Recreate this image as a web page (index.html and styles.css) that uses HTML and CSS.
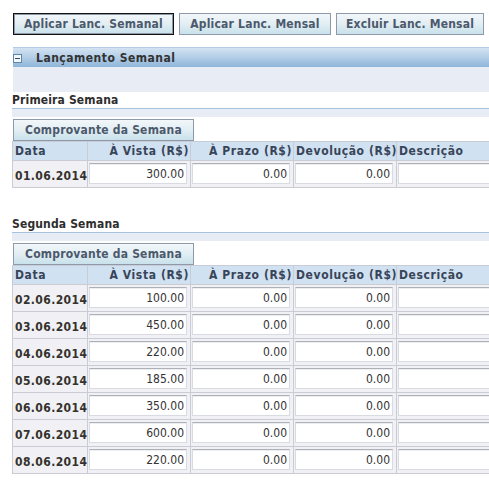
FILE: index.html
```html
<!DOCTYPE html>
<html lang="pt">
<head>
<meta charset="utf-8">
<title>Lançamento Semanal</title>
<link rel="stylesheet" href="styles.css">
</head>
<body>
<div class="page">
  <div class="actions">
    <button class="btn btn-focus btn-w1">Aplicar Lanc. Semanal</button>
    <button class="btn btn-w2">Aplicar Lanc. Mensal</button>
    <button class="btn btn-w3">Excluir Lanc. Mensal</button>
  </div>

  <div class="panel-head">
    <span class="toggle"><span class="toggle-bar"></span></span>
    <span class="panel-title">Lançamento Semanal</span>
  </div>
  <div class="panel-band"></div>

  <section class="week">
    <h2 class="week-title">Primeira Semana</h2>
    <div class="week-band"></div>
    <button class="btn btn-small">Comprovante da Semana</button>
    <table class="grid">
      <thead>
        <tr>
          <th class="c-date">Data</th>
          <th class="c-num">À Vista (R$)</th>
          <th class="c-num">À Prazo (R$)</th>
          <th class="c-num">Devolução (R$)</th>
          <th class="c-desc">Descrição</th>
        </tr>
      </thead>
      <tbody>
        <tr><td class="date">01.06.2014</td><td><input class="inp" value="300.00"></td><td><input class="inp" value="0.00"></td><td><input class="inp" value="0.00"></td><td><input class="inp inp-text" value=""></td></tr>
      </tbody>
    </table>
  </section>

  <section class="week week-2">
    <h2 class="week-title">Segunda Semana</h2>
    <div class="week-band"></div>
    <button class="btn btn-small">Comprovante da Semana</button>
    <table class="grid">
      <thead>
        <tr>
          <th class="c-date">Data</th>
          <th class="c-num">À Vista (R$)</th>
          <th class="c-num">À Prazo (R$)</th>
          <th class="c-num">Devolução (R$)</th>
          <th class="c-desc">Descrição</th>
        </tr>
      </thead>
      <tbody>
        <tr><td class="date">02.06.2014</td><td><input class="inp" value="100.00"></td><td><input class="inp" value="0.00"></td><td><input class="inp" value="0.00"></td><td><input class="inp inp-text" value=""></td></tr>
        <tr><td class="date">03.06.2014</td><td><input class="inp" value="450.00"></td><td><input class="inp" value="0.00"></td><td><input class="inp" value="0.00"></td><td><input class="inp inp-text" value=""></td></tr>
        <tr><td class="date">04.06.2014</td><td><input class="inp" value="220.00"></td><td><input class="inp" value="0.00"></td><td><input class="inp" value="0.00"></td><td><input class="inp inp-text" value=""></td></tr>
        <tr><td class="date">05.06.2014</td><td><input class="inp" value="185.00"></td><td><input class="inp" value="0.00"></td><td><input class="inp" value="0.00"></td><td><input class="inp inp-text" value=""></td></tr>
        <tr><td class="date">06.06.2014</td><td><input class="inp" value="350.00"></td><td><input class="inp" value="0.00"></td><td><input class="inp" value="0.00"></td><td><input class="inp inp-text" value=""></td></tr>
        <tr><td class="date">07.06.2014</td><td><input class="inp" value="600.00"></td><td><input class="inp" value="0.00"></td><td><input class="inp" value="0.00"></td><td><input class="inp inp-text" value=""></td></tr>
        <tr><td class="date">08.06.2014</td><td><input class="inp" value="220.00"></td><td><input class="inp" value="0.00"></td><td><input class="inp" value="0.00"></td><td><input class="inp inp-text" value=""></td></tr>
      </tbody>
    </table>
  </section>
</div>
</body>
</html>
```

FILE: styles.css
```css
html, body {
  margin: 0;
  padding: 0;
  background: #ffffff;
  overflow: hidden;
}

body {
  font-family: "DejaVu Sans Condensed", "DejaVu Sans", Verdana, sans-serif;
  font-stretch: condensed;
  font-size: 12px;
  color: #333333;
}

.page {
  padding: 13px 0 0 12px;
  width: 520px;
}

/* buttons */
.actions {
  display: flex;
  gap: 5px;
  margin-left: 1px;
  height: 22px;
}

.btn {
  height: 22px;
  box-sizing: border-box;
  padding: 0;
  border: 1px solid #8e9aa9;
  background: linear-gradient(to bottom, #f2f7f9 0%, #e2eef3 50%, #c8e1eb 100%);
  font-family: "DejaVu Sans Condensed", "DejaVu Sans", Verdana, sans-serif;
  font-stretch: condensed;
  font-size: 12px;
  font-weight: bold;
  letter-spacing: 0.2px;
  color: #4c596c;
  line-height: 20px;
  text-align: center;
  cursor: pointer;
}

.btn-w1 { width: 161px; }
.btn-w2 { width: 152px; }
.btn-w3 { width: 148px; }

.btn-focus {
  border: 1px solid #111111;
  box-shadow: inset 0 0 0 1px #8e9aa9;
}

.btn-small {
  display: block;
  margin: 2px 0 0 1px;
  width: 181px;
}

/* panel */
.panel-head {
  margin: 12px 0 0 1px;
  height: 20px;
  box-sizing: border-box;
  border-top: 1px solid #b3cce3;
  background: linear-gradient(to bottom, #d3e3f2 0%, #b2cde6 50%, #8db5d9 100%);
  display: flex;
  align-items: center;
}

.toggle {
  width: 9px;
  height: 9px;
  box-sizing: border-box;
  border: 1px solid #5f86ad;
  background: #f4f8fc;
  margin: 2px 0 0 0;
  display: flex;
  align-items: center;
  justify-content: center;
}

.toggle-bar {
  width: 5px;
  height: 1px;
  background: #33475e;
}

.panel-title {
  margin-left: 14px;
  font-weight: bold;
  letter-spacing: 0.5px;
  color: #333333;
}

.panel-band {
  margin-left: 1px;
  height: 25px;
  background: #e8edf5;
}

/* week sections */
.week-title {
  margin: 0;
  height: 17px;
  box-sizing: border-box;
  border-bottom: 1px solid #a3c3df;
  font-size: 12px;
  font-weight: bold;
  letter-spacing: 0.15px;
  line-height: 17px;
  color: #2e2e2e;
}

.week-band {
  height: 8px;
  background: #e8edf5;
}

.week-2 {
  margin-top: 28px;
}

/* grid */
.grid {
  border-collapse: separate;
  border-spacing: 0;
  table-layout: fixed;
  width: 489px;
  border-left: 1px solid #c9ccd4;
}

.grid th,
.grid td {
  box-sizing: border-box;
  border-right: 1px solid #c9ccd4;
  border-bottom: 1px solid #c9ccd4;
}

.grid th {
  height: 20px;
  padding: 0 1px 0 2px;
  background: #d0e1f1;
  font-weight: bold;
  letter-spacing: 0.6px;
  color: #384559;
  white-space: nowrap;
  border-top: 1px solid #c9ccd4;
}

.c-date { width: 75px; text-align: left; }
.c-num { width: 103px; text-align: right; }
.c-desc { width: 104px; text-align: left; }

.grid td {
  height: 27px;
  padding: 2px 2px 3px 1px;
  background: #f1f1f5;
  vertical-align: top;
}

.grid td.date {
  padding: 4px 0 0 2px;
  vertical-align: middle;
  font-weight: bold;
  letter-spacing: 0.4px;
  color: #35322e;
  white-space: nowrap;
}

.inp {
  display: block;
  width: 98px;
  height: 21px;
  box-sizing: border-box;
  margin: 0;
  padding: 1px 2px 0 2px;
  border: 1px solid #d9dbe2;
  border-top-color: #aeb0b8;
  box-shadow: inset 0 1px 0 #eceef2;
  background: #ffffff;
  font-family: "DejaVu Sans Condensed", "DejaVu Sans", Verdana, sans-serif;
  font-stretch: condensed;
  font-size: 12px;
  color: #333333;
  text-align: right;
}

.inp-text {
  width: 140px;
  text-align: left;
}
```
